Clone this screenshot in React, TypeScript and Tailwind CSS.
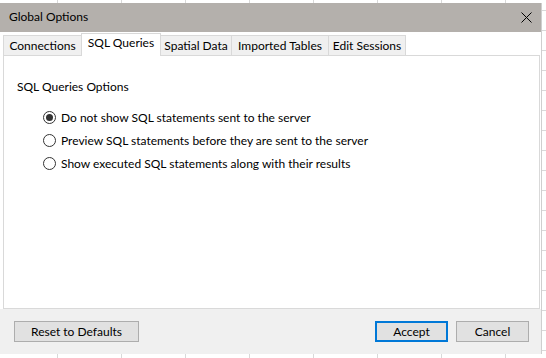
import { useState } from "react";

const tabs = [
  { label: "Connections", w: "w-[79px]" },
  { label: "SQL Queries", w: "w-[80px]" },
  { label: "Spatial Data", w: "w-[72px]" },
  { label: "Imported Tables", w: "w-[98px]" },
  { label: "Edit Sessions", w: "w-[78px]" },
];

const options = [
  "Do not show SQL statements sent to the server",
  "Preview SQL statements before they are sent to the server",
  "Show executed SQL statements along with their results",
];

const Radio = ({ checked }: { checked: boolean }) => (
  <span className="w-[13px] h-[13px] rounded-full border border-[#333333] bg-white flex items-center justify-center shrink-0">
    {checked && <span className="w-[7px] h-[7px] rounded-full bg-[#333333]" />}
  </span>
);

export default function App() {
  const [active, setActive] = useState(1);
  const [choice, setChoice] = useState(0);

  return (
    <div className="w-[546px] h-[358px] overflow-hidden bg-white bg-[linear-gradient(to_right,#d9d9d9_1px,transparent_1px),linear-gradient(to_bottom,#d9d9d9_1px,transparent_1px)] bg-[size:64px_20px] bg-[position:57px_10px] font-['Lato','Liberation_Sans',sans-serif] text-[12px] leading-[16px] text-black">
      <div className="mt-[3px] w-[541px] h-[351px] flex flex-col shadow-[1px_0_0_#cfcfcf]">
        {/* title bar */}
        <div className="h-[29px] bg-[#b4b0ac] flex items-center justify-between pl-[9px] pr-[9px] pb-[1px]">
          <span>Global Options</span>
          <svg width="11" height="11" viewBox="0 0 11 11" className="mt-[1px]">
            <path d="M0.5 0.5 L10.5 10.5 M10.5 0.5 L0.5 10.5" stroke="#000" strokeWidth="1" />
          </svg>
        </div>

        {/* tabs + page */}
        <div className="bg-white h-[277px] flex flex-col">
          <div className="h-[23px] flex items-end pl-[3px]">
            {tabs.map((t, i) =>
              i === active ? (
                <button
                  key={t.label}
                  onClick={() => setActive(i)}
                  className={`${t.w} h-[23px] -mb-px ${i > 0 ? "-ml-px" : ""} relative z-10 bg-white border-l border-t border-r border-[#d9d9d9] flex justify-center items-start pt-px`}
                >
                  {t.label}
                </button>
              ) : (
                <button
                  key={t.label}
                  onClick={() => setActive(i)}
                  className={`${t.w} h-[20px] ${i > 0 ? "-ml-px" : ""} bg-[#f0f0f0] border-l border-t border-r border-[#d9d9d9] flex justify-center items-start pt-[2px]`}
                >
                  {t.label}
                </button>
              )
            )}
          </div>
          <div className="ml-[3px] w-[537px] h-[254px] border border-[#d9d9d9] pl-[13px] pt-[23px]">
            <div>SQL Queries Options</div>
            <div className="mt-[11px] ml-[26px] flex flex-col">
              {options.map((o, i) => (
                <label
                  key={o}
                  onClick={() => setChoice(i)}
                  className="h-[23px] flex items-center gap-[5px] cursor-default"
                >
                  <Radio checked={choice === i} />
                  <span>{o}</span>
                </label>
              ))}
            </div>
          </div>
        </div>

        {/* footer */}
        <div className="h-[45px] bg-[#f0f0f0] flex items-start pt-[12px] pl-[14px] pr-[12px]">
          <button className="w-[125px] h-[21px] bg-[#e1e1e1] border border-[#adadad]">
            Reset to Defaults
          </button>
          <div className="ml-auto flex gap-[8px]">
            <button className="w-[73px] h-[21px] bg-[#e1e1e1] border-2 border-[#0078d7]">
              Accept
            </button>
            <button className="w-[73px] h-[21px] bg-[#e1e1e1] border border-[#adadad]">
              Cancel
            </button>
          </div>
        </div>
      </div>
    </div>
  );
}
